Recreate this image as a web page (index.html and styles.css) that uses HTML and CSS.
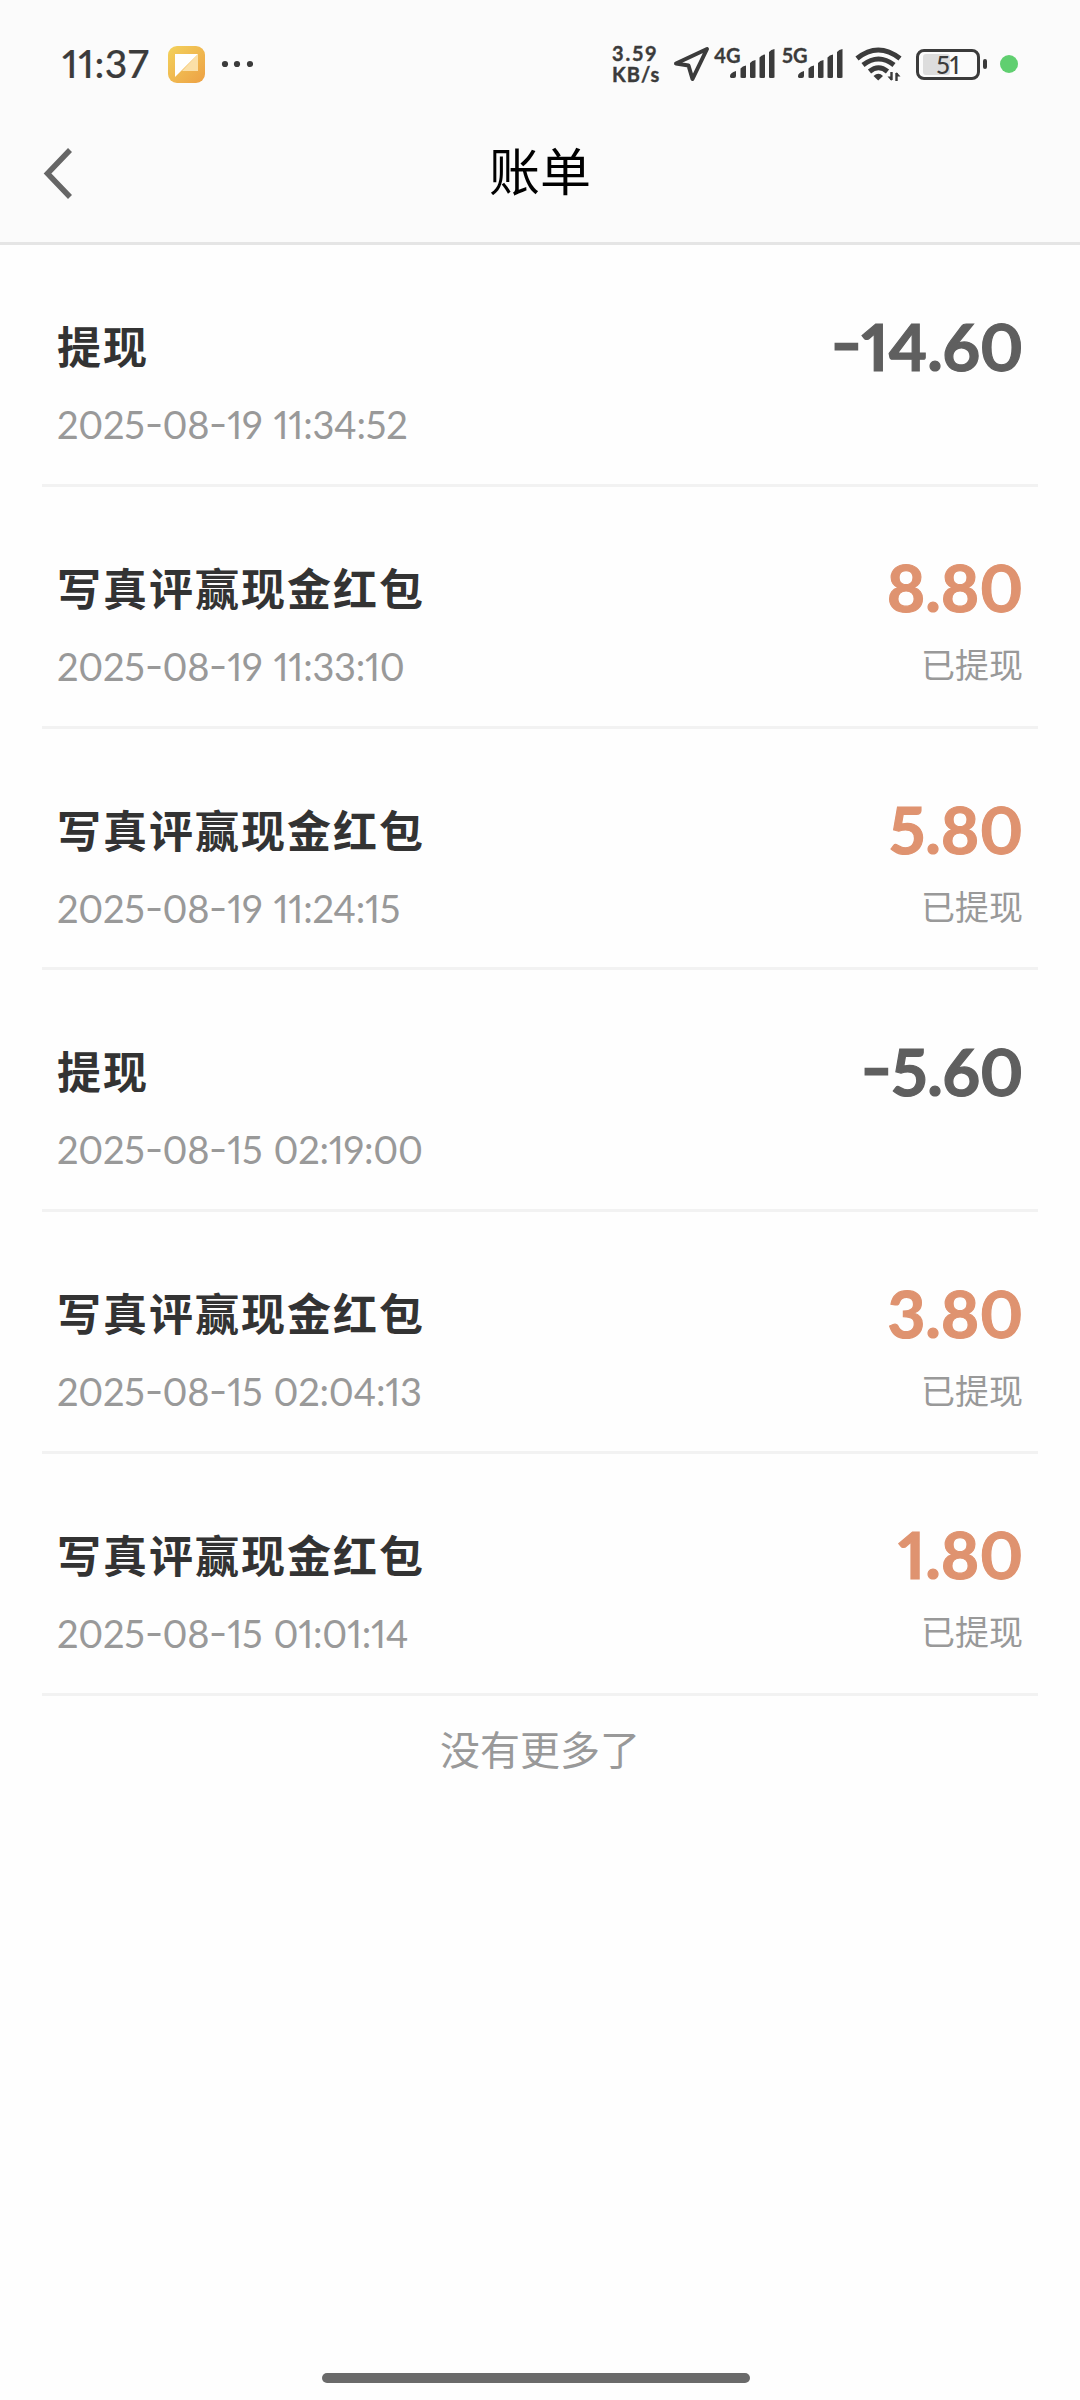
FILE: index.html
```html
<!DOCTYPE html>
<html lang="zh-CN">
<head>
<meta charset="utf-8">
<title>账单</title>
<link rel="stylesheet" href="styles.css">
</head>
<body>
<header class="header">
  <div class="status">
    <span class="clock">11:37</span>
    <svg class="app" width="37" height="37" viewBox="0 0 37 37">
      <defs><linearGradient id="g" x1="0" y1="0" x2="1" y2="1"><stop offset="0" stop-color="#f3d25c"/><stop offset="1" stop-color="#eda044"/></linearGradient></defs>
      <rect width="37" height="37" rx="9" fill="url(#g)"/>
      <path d="M30 8v17H14z" fill="#fbe0a8"/>
      <path d="M7 8h23L7 31z" fill="#fff"/>
    </svg>
    <svg class="dots" width="32" height="8" viewBox="0 0 32 8"><circle cx="4" cy="4" r="3.1"/><circle cx="16" cy="4" r="3.1"/><circle cx="29" cy="4" r="3.1"/></svg>
    <span class="spacer"></span>
    <div class="speed"><span class="rate">3.59</span><span class="unit">KB/s</span></div>
    <svg class="nav-arrow" width="38" height="38" viewBox="0 0 38 38"><path d="M3 18.500 34 4 19.500 34 15.500 20.500z" fill="none" stroke="#3b3b3b" stroke-width="4" stroke-linejoin="round"/></svg>
    <span class="net">4G</span>
    <svg class="bars" width="46" height="30" viewBox="0 0 46 30"><path d="M0 28v-1q0-3 6-5v5q0 2-2 2H1zM10.500 28.500V19.500q2-2.500 5.500-3V28.500q-2.800 1-5.500 0zM20 28.500V14q2-2.500 5.500-3V28.500q-2.800 1-5.500 0zM29.500 28.500V8.500q2-2.500 5.500-3V28.500q-2.800 1-5.500 0zM39 28.500V3q2-2.500 5.500-3V28.500q-2.800 1-5.500 0z"/></svg>
    <span class="net net-second">5G</span>
    <svg class="bars" width="46" height="30" viewBox="0 0 46 30"><path d="M0 28v-1q0-3 6-5v5q0 2-2 2H1zM10.500 28.500V19.500q2-2.500 5.500-3V28.500q-2.800 1-5.500 0zM20 28.500V14q2-2.500 5.500-3V28.500q-2.800 1-5.500 0zM29.500 28.500V8.500q2-2.500 5.500-3V28.500q-2.800 1-5.500 0zM39 28.500V3q2-2.500 5.500-3V28.500q-2.800 1-5.500 0z"/></svg>
    <svg class="wifi" width="48" height="36" viewBox="0 0 48 36">
      <g fill="none" stroke="#3b3b3b" stroke-width="5"><path d="M2 12.500q21-17 43 0"/><path d="M8 19q15.500-12 31 0"/><path d="M14.500 25.500q9-7.500 18 0"/></g>
      <path d="M18.500 30q5-4.500 9.500 0l-4.800 4.500z"/>
      <path d="M36.500 26v8M41.500 35v-8" fill="none" stroke="#3b3b3b" stroke-width="2.400"/>
      <path d="M32.500 30.500 36.500 35v-4.500zM45.500 30.500 41.500 26v4.500z"/>
    </svg>
    <div class="battery"><span class="level"></span><span class="percent">51</span></div>
    <span class="tip"></span>
    <span class="mic"></span>
  </div>
  <nav class="nav">
    <svg class="back" width="32" height="54" viewBox="0 0 32 54"><path d="M27 4 4.500 27.500 27 51" fill="none" stroke="#666" stroke-width="5.500"/></svg>
    <h1 class="title">账单</h1>
  </nav>
</header>
<main class="list">
  <section class="row">
    <div class="line"><span class="name">提现</span><span class="amount out"><span class="minus">-</span>14.60</span></div>
    <div class="line sub"><span class="date">2025<span class="dash">-</span>08<span class="dash">-</span>19 11:34:52</span></div>
  </section>
  <section class="row">
    <div class="line"><span class="name">写真评赢现金红包</span><span class="amount">8.80</span></div>
    <div class="line sub"><span class="date">2025<span class="dash">-</span>08<span class="dash">-</span>19 11:33:10</span><span class="state">已提现</span></div>
  </section>
  <section class="row">
    <div class="line"><span class="name">写真评赢现金红包</span><span class="amount">5.80</span></div>
    <div class="line sub"><span class="date">2025<span class="dash">-</span>08<span class="dash">-</span>19 11:24:15</span><span class="state">已提现</span></div>
  </section>
  <section class="row">
    <div class="line"><span class="name">提现</span><span class="amount out"><span class="minus">-</span>5.60</span></div>
    <div class="line sub"><span class="date">2025<span class="dash">-</span>08<span class="dash">-</span>15 02:19:00</span></div>
  </section>
  <section class="row">
    <div class="line"><span class="name">写真评赢现金红包</span><span class="amount">3.80</span></div>
    <div class="line sub"><span class="date">2025<span class="dash">-</span>08<span class="dash">-</span>15 02:04:13</span><span class="state">已提现</span></div>
  </section>
  <section class="row">
    <div class="line"><span class="name">写真评赢现金红包</span><span class="amount">1.80</span></div>
    <div class="line sub"><span class="date">2025<span class="dash">-</span>08<span class="dash">-</span>15 01:01:14</span><span class="state">已提现</span></div>
  </section>
  <p class="end">没有更多了</p>
</main>
<footer class="home"><span class="home-bar"></span></footer>
</body>
</html>
```
FILE: styles.css
```css
* { box-sizing: border-box; }
body {
  margin: 0;
  width: 1080px;
  height: 2400px;
  display: flex;
  flex-direction: column;
  background: #fefefe;
  color: #333;
  font-family: Lato, "Noto Sans CJK SC", sans-serif;
  font-feature-settings: "pnum", "lnum";
}
svg { display: block; flex: none; fill: #3b3b3b; }
.header { height: 245px; background: #fbfbfb; border-bottom: 3px solid #e5e5e5; }
.status { height: 128px; padding: 0 62px; display: flex; align-items: center; color: #3b3b3b; }
.clock { width: 106px; padding-bottom: 2px; font-size: 39px; font-weight: 500; line-height: 40px; letter-spacing: 0.6px; -webkit-text-stroke: 0.2px; }
.app { margin-right: 16px; }
.spacer { flex: 1; }
.speed { width: 61px; margin-bottom: 1px; display: flex; flex-direction: column; gap: 1px; font-size: 20px; font-weight: 700; line-height: 20px; letter-spacing: 1px; -webkit-text-stroke: 0.4px; }
.rate { letter-spacing: 2px; }
.nav-arrow { margin-right: 4px; }
.net { width: 16px; margin: 0 0 19px -1px; font-size: 20px; line-height: 20px; font-weight: 700; white-space: nowrap; -webkit-text-stroke: 0.3px; }
.net-second { margin-left: 6px; }
.wifi { margin: 0 13px 0 11px; }
.battery {
  position: relative;
  width: 64px;
  height: 31px;
  flex: none;
  border: 3.5px solid #3b3b3b;
  border-radius: 8px;
  display: flex;
  align-items: center;
  justify-content: center;
}
.level { position: absolute; left: 4px; top: 2px; width: 27px; height: 21px; border-radius: 3px; background: #ddd; }
.percent { position: relative; font-size: 25px; line-height: 24px; font-weight: 500; }
.tip { width: 4px; height: 10px; margin: 0 13px 0 3px; border-radius: 2px; background: #3b3b3b; }
.mic { width: 18px; height: 18px; border-radius: 50%; background: #60cf70; }
.nav { height: 90px; padding: 0 43px; display: flex; align-items: center; }
.title { flex: 1; margin: 0 32px 3px 0; text-align: center; font-size: 51px; line-height: 60px; font-weight: 400; color: #000; }
.list { flex: 1; padding: 0 42px; }
.row { height: 241.8px; padding: 69px 15px 0; border-bottom: 3px solid #f2f2f2; }
.line { height: 64px; display: flex; align-items: center; justify-content: space-between; }
.sub { height: 50px; margin-top: 21px; color: #999; }
.name { padding-top: 2px; font-size: 44px; line-height: 64px; font-weight: 700; letter-spacing: 2px; }
.amount { padding-bottom: 1px; font-size: 65.5px; line-height: 64px; font-weight: 700; color: #df9370; -webkit-text-stroke: 1.2px; }
.out { color: #5f5f5f; letter-spacing: -0.3px; }
.minus, .dash { display: inline-block; line-height: 1; }
.minus { margin-right: 1px; transform: translate(-2px, -5px) scaleX(1.3); }
.dash { margin: 0 2px; transform: translateY(-2px) scaleX(1.35); }
.date { font-size: 38px; line-height: 50px; letter-spacing: -0.25px; word-spacing: 1.5px; }
.state { padding-bottom: 1px; font-size: 34px; line-height: 50px; }
.end { margin: 0; padding-top: 24px; text-align: center; font-size: 40px; line-height: 60px; color: #999; }
.home { height: 27px; }
.home-bar { display: block; width: 428px; height: 10px; margin-left: 322px; border-radius: 5px; background: #6a6a6a; }
```
